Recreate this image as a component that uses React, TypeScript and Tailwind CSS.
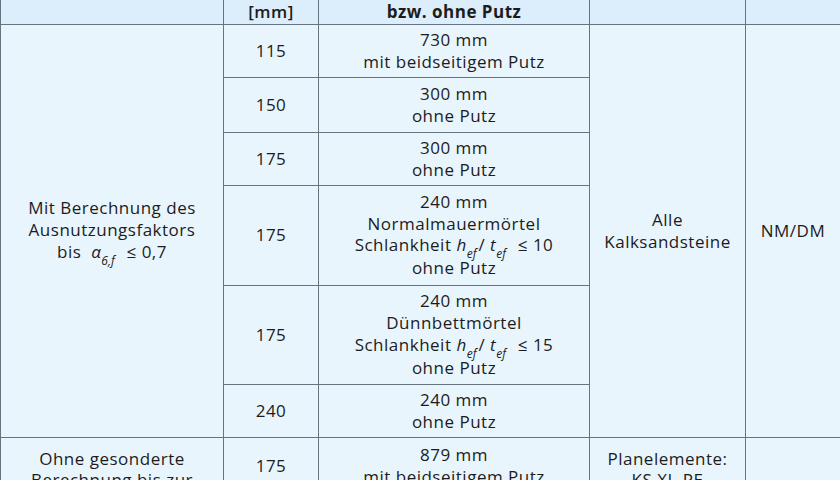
import React from 'react';

const cell = 'border border-[#66747f] text-center align-middle px-1 py-0';

function Sub({ base, sub }: { base: string; sub: string }) {
  return (
    <span className="italic">
      {base}
      <sub className="text-[12px] tracking-normal align-[-4px] leading-none pr-[2px]">{sub}</sub>
    </span>
  );
}

function Lines({ lines }: { lines: React.ReactNode[] }) {
  return (
    <>
      {lines.map((l, i) => (
        <div key={i}>{l}</div>
      ))}
    </>
  );
}

export default function App() {
  return (
    <div className="w-[840px] h-[480px] overflow-hidden bg-[#e9f5fd] text-[#1c1c1c] font-['Open_Sans',sans-serif] text-[17px] leading-[21.7px] tracking-[0.5px]">
      <table className="w-[840px] table-fixed border-collapse">
        <colgroup>
          <col className="w-[223px]" />
          <col className="w-[95px]" />
          <col className="w-[271px]" />
          <col className="w-[156px]" />
          <col className="w-[95px]" />
        </colgroup>
        <tbody>
          <tr className="h-[24px] bg-[#dcedfb] font-bold">
            <td className={cell + ' border-t-0'}></td>
            <td className={cell + ' border-t-0 font-semibold'}>[mm]</td>
            <td className={cell + ' border-t-0'}>bzw. ohne Putz</td>
            <td className={cell + ' border-t-0'}></td>
            <td className={cell + ' border-t-0'}></td>
          </tr>
          <tr className="h-[53px]">
            <td className={cell} rowSpan={6}>
              <Lines
                lines={[
                  'Mit Berechnung des',
                  'Ausnutzungsfaktors',
                  <>
                    bis&nbsp; <Sub base="α" sub="6,f" />&nbsp; ≤ 0,7
                  </>,
                ]}
              />
            </td>
            <td className={cell}>115</td>
            <td className={cell}>
              <Lines lines={['730 mm', 'mit beidseitigem Putz']} />
            </td>
            <td className={cell} rowSpan={6}>
              <Lines lines={['Alle', 'Kalksandsteine']} />
            </td>
            <td className={cell} rowSpan={6}>NM/DM</td>
          </tr>
          <tr className="h-[55px]">
            <td className={cell}>150</td>
            <td className={cell}>
              <Lines lines={['300 mm', 'ohne Putz']} />
            </td>
          </tr>
          <tr className="h-[53px]">
            <td className={cell}>175</td>
            <td className={cell}>
              <Lines lines={['300 mm', 'ohne Putz']} />
            </td>
          </tr>
          <tr className="h-[100px]">
            <td className={cell}>175</td>
            <td className={cell}>
              <Lines
                lines={[
                  '240 mm',
                  'Normalmauermörtel',
                  <>
                    Schlankheit <Sub base="h" sub="ef" />/ <Sub base="t" sub="ef" />&nbsp; ≤ 10
                  </>,
                  'ohne Putz',
                ]}
              />
            </td>
          </tr>
          <tr className="h-[99px]">
            <td className={cell}>175</td>
            <td className={cell}>
              <Lines
                lines={[
                  '240 mm',
                  'Dünnbettmörtel',
                  <>
                    Schlankheit <Sub base="h" sub="ef" />/ <Sub base="t" sub="ef" />&nbsp; ≤ 15
                  </>,
                  'ohne Putz',
                ]}
              />
            </td>
          </tr>
          <tr className="h-[53px]">
            <td className={cell}>240</td>
            <td className={cell}>
              <Lines lines={['240 mm', 'ohne Putz']} />
            </td>
          </tr>
          <tr className="h-[57px]">
            <td className={cell + ' align-top pt-[10px]'} rowSpan={2}>
              <Lines lines={['Ohne gesonderte', 'Berechnung bis zur', 'Ausnutzung von 0,5']} />
            </td>
            <td className={cell}>175</td>
            <td className={cell}>
              <Lines lines={['879 mm', 'mit beidseitigem Putz']} />
            </td>
            <td className={cell + ' align-top pt-[10px]'} rowSpan={2}>
              <Lines lines={['Planelemente:', 'KS XL-PE']} />
            </td>
            <td className={cell} rowSpan={2}></td>
          </tr>
          <tr className="h-[53px]">
            <td className={cell}>240</td>
            <td className={cell}>
              <Lines lines={['879 mm', 'ohne Putz']} />
            </td>
          </tr>
        </tbody>
      </table>
    </div>
  );
}
